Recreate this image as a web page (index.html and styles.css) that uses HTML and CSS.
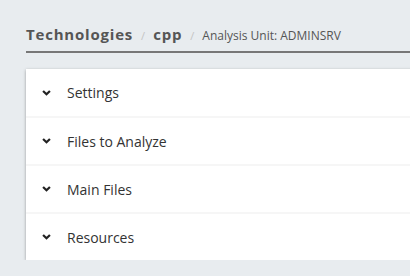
FILE: index.html
```html
<!DOCTYPE html>
<html lang="en">
<head>
  <meta charset="UTF-8" />
  <title>Analysis Unit</title>
  <link rel="stylesheet" href="styles.css">
</head>
<body>
  <div class="page">
    <div class="breadcrumb">
      <span class="crumb">Technologies</span>
      <span class="sep">/</span>
      <span class="crumb">cpp</span>
      <span class="sep">/</span>
      <span class="current">Analysis Unit: ADMINSRV</span>
    </div>

    <div class="panel">
      <div class="section">
        <svg class="chevron" viewBox="0 0 10 7"><path d="M1 1.2 L5 5 L9 1.2" /></svg>
        <span>Settings</span>
      </div>
      <div class="section">
        <svg class="chevron" viewBox="0 0 10 7"><path d="M1 1.2 L5 5 L9 1.2" /></svg>
        <span>Files to Analyze</span>
      </div>
      <div class="section">
        <svg class="chevron" viewBox="0 0 10 7"><path d="M1 1.2 L5 5 L9 1.2" /></svg>
        <span>Main Files</span>
      </div>
      <div class="section">
        <svg class="chevron" viewBox="0 0 10 7"><path d="M1 1.2 L5 5 L9 1.2" /></svg>
        <span>Resources</span>
      </div>
    </div>
  </div>
</body>
</html>
```

FILE: styles.css
```css
body {
  font-family: "Open Sans", Arial, sans-serif;
  background-color: #e8ecef;
  margin: 0;
  overflow: hidden;
}
.page {
  padding: 24px 0 0 26px;
}
.breadcrumb {
  display: flex;
  align-items: baseline;
  gap: 8px;
  height: 27px;
  border-bottom: 2px solid #777;
  color: #555;
}
.crumb {
  font-size: 15px;
  font-weight: bold;
  letter-spacing: 0.8px;
}
.sep {
  font-size: 11px;
  color: #c4c4c4;
}
.current {
  font-size: 12px;
  color: #555;
}
.panel {
  margin-top: 16px;
  margin-right: -10px;
  background-color: #fff;
  box-shadow: 0 1px 3px rgba(0,0,0,0.35);
}
.section {
  display: flex;
  align-items: center;
  height: 46px;
  padding-left: 16px;
  font-size: 14px;
  color: #333;
  border-top: 2px solid #f6f6f6;
}
.section:first-child {
  border-top: none;
  height: 47px;
}
.chevron {
  width: 9px;
  height: 6px;
  margin-right: 16px;
  fill: none;
  stroke: #222;
  stroke-width: 2.6;
}
```
